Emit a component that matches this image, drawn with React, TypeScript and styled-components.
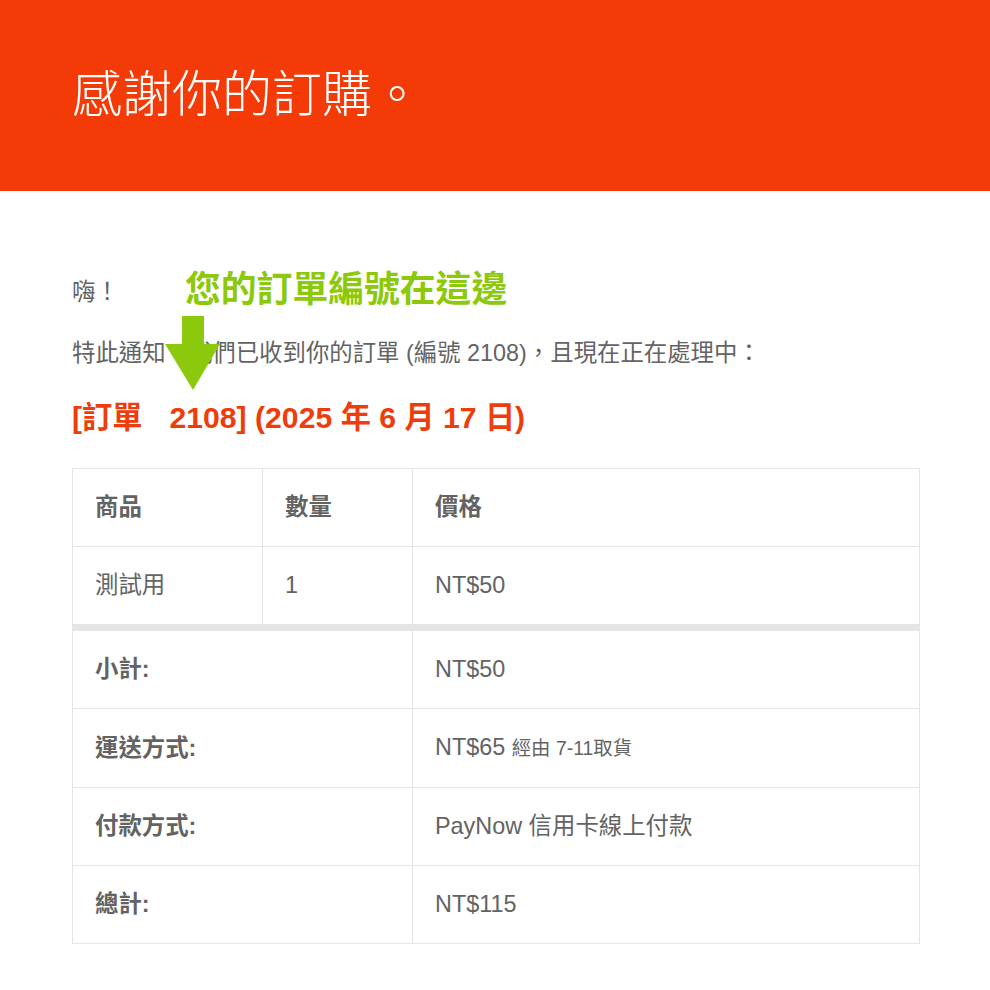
import React from "react";
import styled, { createGlobalStyle } from "styled-components";

const Global = createGlobalStyle`
  html, body { margin: 0; padding: 0; background: #ffffff; }
  body { font-family: "Liberation Sans", "Noto Sans CJK TC", Arial, sans-serif; }
`;

const Header = styled.header`
  height: 191px;
  background: #f43b07;
  display: flex;
  align-items: center;
  padding: 0 72px;
  box-sizing: border-box;
`;

const Title = styled.h1`
  margin: 0;
  color: #ffffff;
  font-family: "Noto Sans CJK TC", "Liberation Sans", sans-serif;
  font-weight: 300;
  font-size: 50px;
  line-height: 1;
  letter-spacing: 0;
  padding-bottom: 12px;
`;

const Content = styled.main`
  padding: 84px 70px 48px 72px;
  color: #636363;
  font-size: 23.4px;
`;

const Para = styled.p`
  margin: 0 0 26px;
  line-height: 35px;
  position: relative;
`;

const Note = styled.span`
  position: absolute;
  left: 113px;
  top: -7px;
  color: #8cc90c;
  font-family: "Noto Sans CJK TC", sans-serif;
  font-weight: 700;
  font-size: 35.8px;
  line-height: 36px;
  white-space: nowrap;
  z-index: 2;
`;

const Arrow = styled.svg`
  position: absolute;
  left: 93px;
  top: 41px;
  z-index: 2;
`;

const OrderHeading = styled.h2`
  margin: 27px 0 31px;
  color: #ee3d0b;
  font-weight: 700;
  font-size: 30.2px;
  line-height: 39px;
`;

const Gap = styled.span`
  display: inline-block;
  width: 27px;
`;

const Table = styled.table`
  width: 100%;
  border-collapse: collapse;
  table-layout: fixed;
  border: 1px solid #e5e5e5;
`;

const Cell = styled.td<{ $bold?: boolean; $thick?: boolean }>`
  border: 1px solid #e5e5e5;
  ${(p) => (p.$thick ? "border-top: 7px solid #e5e5e5;" : "")}
  padding: 20px 22px;
  line-height: 37px;
  text-align: left;
  vertical-align: middle;
  color: #636363;
  font-weight: ${(p) => (p.$bold ? 700 : 400)};
`;

const Small = styled.small`
  font-size: 19.4px;
`;

const rows: { label: string; value: React.ReactNode }[] = [
  { label: "小計:", value: "NT$50" },
  {
    label: "運送方式:",
    value: (
      <>
        NT$65 <Small>經由 7-11取貨</Small>
      </>
    ),
  },
  { label: "付款方式:", value: "PayNow 信用卡線上付款" },
  { label: "總計:", value: "NT$115" },
];

export default function App() {
  return (
    <>
      <Global />
      <Header>
        <Title>感謝你的訂購。</Title>
      </Header>
      <Content>
        <Para>
          嗨！
          <Note>您的訂單編號在這邊</Note>
          <Arrow width="55" height="74" viewBox="0 0 55 74">
            <rect x="17" y="0" width="22" height="29" fill="#8cc90c" />
            <polygon points="0,28 55,28 28,74" fill="#8cc90c" />
          </Arrow>
        </Para>
        <Para>特此通知，我們已收到你的訂單 (編號 2108)，且現在正在處理中：</Para>
        <OrderHeading>
          [訂單<Gap />2108] (2025 年 6 月 17 日)
        </OrderHeading>
        <Table>
          <colgroup>
            <col style={{ width: "190px" }} />
            <col style={{ width: "150px" }} />
            <col />
          </colgroup>
          <thead>
            <tr>
              <Cell as="th" $bold>商品</Cell>
              <Cell as="th" $bold>數量</Cell>
              <Cell as="th" $bold>價格</Cell>
            </tr>
          </thead>
          <tbody>
            <tr>
              <Cell>測試用</Cell>
              <Cell>1</Cell>
              <Cell>NT$50</Cell>
            </tr>
          </tbody>
          <tfoot>
            {rows.map((r, i) => (
              <tr key={r.label}>
                <Cell as="th" colSpan={2} $bold $thick={i === 0}>
                  {r.label}
                </Cell>
                <Cell $thick={i === 0}>{r.value}</Cell>
              </tr>
            ))}
          </tfoot>
        </Table>
      </Content>
    </>
  );
}
